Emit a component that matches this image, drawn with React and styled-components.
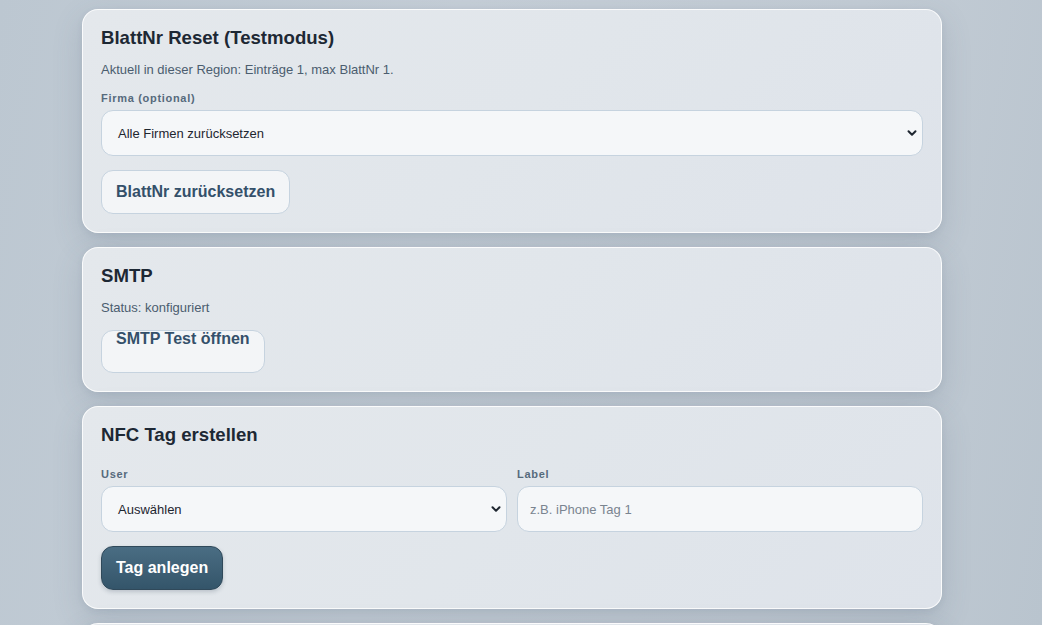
import React from "react";
import styled, { createGlobalStyle } from "styled-components";

const GlobalStyle = createGlobalStyle`
  html, body {
    margin: 0;
    padding: 0;
    height: 100%;
    overflow: hidden;
  }
  body {
    font-family: "Liberation Sans", Arial, sans-serif;
    background: linear-gradient(100deg, #bcc7d1 0%, #c6cfd8 40%, #c3ccd5 75%, #b9c4ce 100%);
    color: #1f2a36;
  }
`;

const Page = styled.div`
  display: flex;
  justify-content: center;
  padding: 9px 18px 0 0;
  min-height: 625px;
  box-sizing: border-box;
`;

const Column = styled.div`
  width: 860px;
  display: flex;
  flex-direction: column;
  gap: 14px;
`;

const Card = styled.section`
  background: linear-gradient(135deg, #e4e8ec 0%, #e1e6eb 50%, #dee3ea 100%);
  border: 1px solid rgba(255, 255, 255, 0.85);
  border-radius: 16px;
  box-shadow: 0 10px 30px rgba(70, 90, 110, 0.18), 0 2px 6px rgba(70, 90, 110, 0.08);
  padding: 17px 18px 18px;
  min-height: ${(p) => p.$minHeight || 0}px;
`;

const Title = styled.h2`
  margin: 0;
  font-size: 18.6px;
  line-height: 22px;
  font-weight: 700;
  color: #1d2834;
`;

const Text = styled.p`
  margin: 12px 0 0;
  font-size: 13px;
  line-height: 18px;
  color: #4b5d6f;
`;

const Label = styled.label`
  display: block;
  margin: ${(p) => p.$top || 0}px 0 5px;
  font-size: 11px;
  line-height: 14px;
  font-weight: 700;
  letter-spacing: 0.7px;
  color: #566a7c;
`;

const Field = styled.div`
  display: flex;
  align-items: center;
  justify-content: space-between;
  height: 46px;
  box-sizing: border-box;
  padding: 0 4px 0 16px;
  background: #f5f7f9;
  border: 1px solid #c6d3df;
  border-radius: 12px;
  font-size: 13px;
  color: ${(p) => (p.$placeholder ? "#7a8490" : "#1e2630")};
  padding-left: ${(p) => (p.$placeholder ? 12 : 16)}px;
`;

const Chevron = () => (
  <svg width="12" height="12" viewBox="0 0 12 12">
    <path d="M2.5 4.2 L6 7.8 L9.5 4.2" fill="none" stroke="#1e2630" strokeWidth="2" strokeLinecap="round" strokeLinejoin="round" />
  </svg>
);

const Row = styled.div`
  display: grid;
  grid-template-columns: 1fr 1fr;
  gap: 10px;
  margin-top: 21px;
`;

const Button = styled.button`
  display: block;
  margin-top: ${(p) => p.$top}px;
  font-family: "Liberation Sans", Arial, sans-serif;
  font-size: 16px;
  font-weight: 700;
  line-height: ${(p) => (p.$topText ? 16 : 18)}px;
  border-radius: 12px;
  cursor: pointer;
  color: ${(p) => (p.$primary ? "#ffffff" : "#34506a")};
  background: ${(p) =>
    p.$primary ? "linear-gradient(180deg, #4a6d83 0%, #34556a 100%)" : "#f3f5f7"};
  border: 1px solid ${(p) => (p.$primary ? "#30495a" : "#c6d3df")};
  box-shadow: ${(p) => (p.$primary ? "0 2px 4px rgba(30,50,70,0.2)" : "none")};
  padding: ${(p) => (p.$topText ? "0 14px 25px" : "12px 14px")};
`;

export default function App() {
  return (
    <>
      <GlobalStyle />
      <Page>
        <Column>
          <Card>
            <Title>BlattNr Reset (Testmodus)</Title>
            <Text>Aktuell in dieser Region: Einträge 1, max BlattNr 1.</Text>
            <Label $top={12}>Firma (optional)</Label>
            <Field>
              Alle Firmen zurücksetzen
              <Chevron />
            </Field>
            <Button $top={14}>BlattNr zurücksetzen</Button>
          </Card>

          <Card>
            <Title>SMTP</Title>
            <Text>Status: konfiguriert</Text>
            <Button $top={13} $topText>SMTP Test öffnen</Button>
          </Card>

          <Card>
            <Title>NFC Tag erstellen</Title>
            <Row>
              <div>
                <Label>User</Label>
                <Field>
                  Auswählen
                  <Chevron />
                </Field>
              </div>
              <div>
                <Label>Label</Label>
                <Field $placeholder>z.B. iPhone Tag 1</Field>
              </div>
            </Row>
            <Button $top={14} $primary>Tag anlegen</Button>
          </Card>

          <Card $minHeight={120} />
        </Column>
      </Page>
    </>
  );
}
